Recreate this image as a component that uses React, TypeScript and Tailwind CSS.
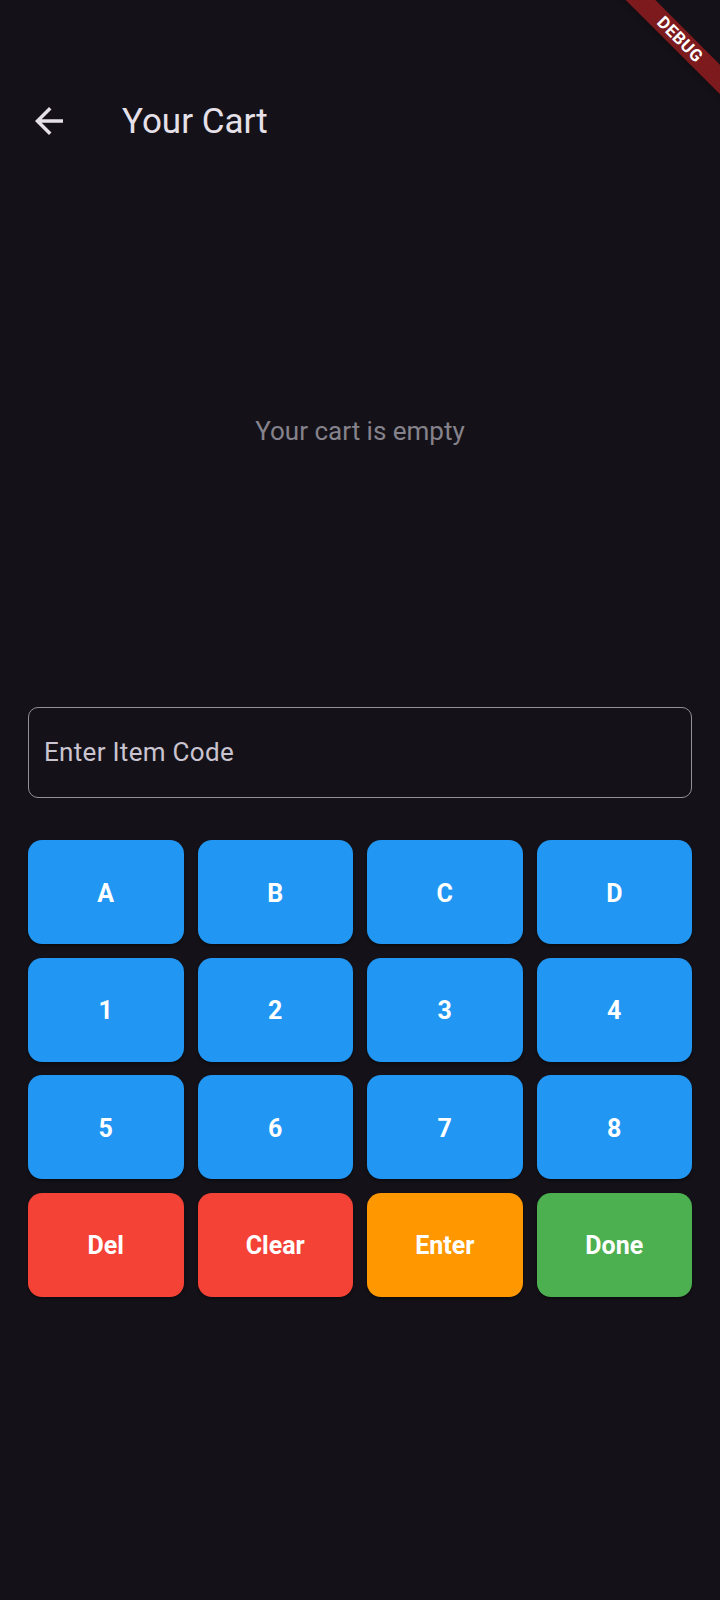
import React from "react"

const keys = [
  { label: "A", color: "bg-[#2196f3]" },
  { label: "B", color: "bg-[#2196f3]" },
  { label: "C", color: "bg-[#2196f3]" },
  { label: "D", color: "bg-[#2196f3]" },
  { label: "1", color: "bg-[#2196f3]" },
  { label: "2", color: "bg-[#2196f3]" },
  { label: "3", color: "bg-[#2196f3]" },
  { label: "4", color: "bg-[#2196f3]" },
  { label: "5", color: "bg-[#2196f3]" },
  { label: "6", color: "bg-[#2196f3]" },
  { label: "7", color: "bg-[#2196f3]" },
  { label: "8", color: "bg-[#2196f3]" },
  { label: "Del", color: "bg-[#f44336]" },
  { label: "Clear", color: "bg-[#f44336]" },
  { label: "Enter", color: "bg-[#ff9800]" },
  { label: "Done", color: "bg-[#4caf50]" },
]

export default function App() {
  return (
    <div className="relative w-[720px] h-[1600px] overflow-hidden bg-[#141218] font-['Roboto',sans-serif]">
      {/* debug banner */}
      <div className="absolute left-[580px] top-[29px] w-[200px] h-[21px] rotate-45 bg-[#7d1a1d] flex items-center justify-center shadow-md">
        <span className="text-white text-[17px] font-bold leading-none tracking-[0.5px]">DEBUG</span>
      </div>

      {/* app bar */}
      <div className="pt-[72px]">
        <div className="h-[98px] flex items-center">
          <div className="w-[98px] h-[98px] flex items-center justify-center">
            <svg width="42" height="42" viewBox="0 0 24 24" fill="#e6e0e9">
              <path d="M20 11H7.83l5.59-5.59L12 4l-8 8 8 8 1.41-1.41L7.83 13H20v-2z" />
            </svg>
          </div>
          <h1 className="ml-[24px] text-[35px] leading-none text-[#e6e0e9] font-normal">Your Cart</h1>
        </div>
      </div>

      {/* cart content */}
      <div className="h-[522px] flex items-center justify-center">
        <p className="text-[26px] text-[#85828b]">Your cart is empty</p>
      </div>

      <div className="px-[28px]">
        <div className="mt-[15px] h-[91px] rounded-[10px] border-[1.5px] border-[#938f99] flex items-center px-[15px]">
          <span className="text-[26px] text-[#cac4d0] tracking-[0.3px]">Enter Item Code</span>
        </div>

        <div className="mt-[42px] grid grid-cols-4 gap-x-[14px] gap-y-[13.5px]">
          {keys.map((k) => (
            <button
              key={k.label}
              className={`${k.color} h-[104px] pt-[3px] rounded-[14px] flex items-center justify-center text-white font-bold text-[25px] shadow-[0_2px_3px_rgba(0,0,0,0.4)]`}
            >
              {k.label}
            </button>
          ))}
        </div>
      </div>
    </div>
  )
}
